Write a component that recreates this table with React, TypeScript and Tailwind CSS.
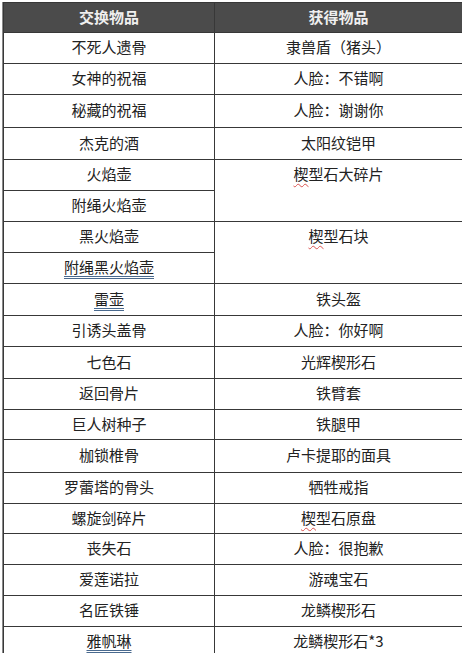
import React from 'react'

type Row = {
  give: React.ReactNode
  get?: React.ReactNode
  span?: boolean
}

const Wavy = ({ children }: { children: React.ReactNode }) => (
  <span className="underline decoration-wavy decoration-[#d9534f] decoration-1 underline-offset-[3px]">
    {children}
  </span>
)

const Marked = ({ children }: { children: React.ReactNode }) => (
  <span className="underline decoration-double decoration-[#4a6a8f] decoration-1 underline-offset-[3px]">
    {children}
  </span>
)

const rows: Row[] = [
  { give: '不死人遗骨', get: '隶兽盾（猪头）' },
  { give: '女神的祝福', get: '人脸：不错啊' },
  { give: '秘藏的祝福', get: '人脸：谢谢你' },
  { give: '杰克的酒', get: '太阳纹铠甲' },
  { give: '火焰壶', get: <><Wavy>楔</Wavy>型石大碎片</>, span: true },
  { give: '附绳火焰壶' },
  { give: '黑火焰壶', get: <><Wavy>楔</Wavy>型石块</>, span: true },
  { give: <Marked>附绳黑火焰壶</Marked> },
  { give: <Marked>雷壶</Marked>, get: '铁头盔' },
  { give: '引诱头盖骨', get: '人脸：你好啊' },
  { give: '七色石', get: '光辉楔形石' },
  { give: '返回骨片', get: '铁臂套' },
  { give: '巨人树种子', get: '铁腿甲' },
  { give: '枷锁椎骨', get: '卢卡提耶的面具' },
  { give: '罗蕾塔的骨头', get: '牺牲戒指' },
  { give: '螺旋剑碎片', get: <><Wavy>楔</Wavy>型石原盘</> },
  { give: '丧失石', get: '人脸：很抱歉' },
  { give: '爱莲诺拉', get: '游魂宝石' },
  { give: '名匠铁锤', get: '龙鳞楔形石' },
  { give: <Marked>雅帆琳</Marked>, get: '龙鳞楔形石*3' },
]

export default function App() {
  return (
    <div className="min-h-screen bg-white pt-[2px] pl-[2px] overflow-hidden">
      <div
        className="grid w-[460px] grid-cols-[210px_247px] grid-rows-[29px_30px_30px_32px_31px_30px_30px_30px_30px_31px_30px_31px_30px_29px_32px_30px_29px_30px_30px_30px_30px] gap-px bg-[#383838] p-px border-l border-l-[#8a8a8a] text-[15px] leading-none text-[#222]"
        style={{ fontFamily: '"Noto Sans CJK SC", "Noto Sans", sans-serif' }}
      >
        {/* Header */}
        <div className="flex items-center justify-center bg-[#4b4b4b] pb-[2px] font-bold text-[#efefef]">
          交换物品
        </div>
        <div className="flex items-center justify-center bg-[#4b4b4b] pb-[2px] font-bold text-[#efefef]">
          获得物品
        </div>

        {rows.map((r, i) => (
          <React.Fragment key={i}>
            <div className="flex items-center justify-center bg-white pb-[3px]">{r.give}</div>
            {r.get !== undefined &&
              (r.span ? (
                <div className="row-span-2 bg-white">
                  <div className="flex h-[30px] items-center justify-center pb-[3px]">{r.get}</div>
                </div>
              ) : (
                <div className="flex items-center justify-center bg-white pb-[3px]">{r.get}</div>
              ))}
          </React.Fragment>
        ))}
      </div>
    </div>
  )
}
